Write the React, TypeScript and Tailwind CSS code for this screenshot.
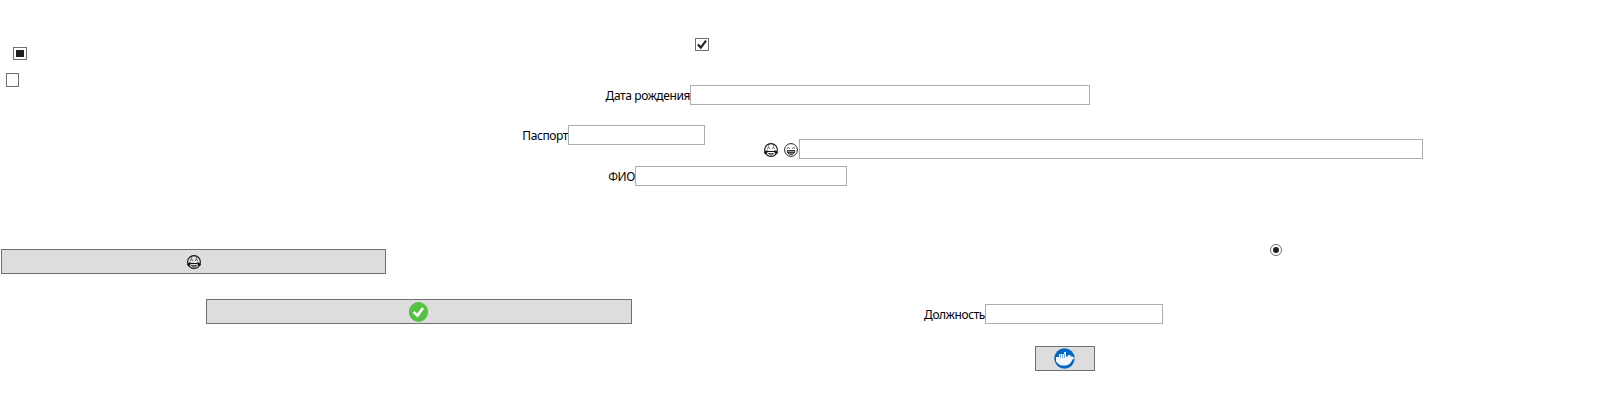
import type { ReactNode } from "react";

function Field({ label, className, labelClass = "tracking-[-0.4px]" }: { label: ReactNode; className: string; labelClass?: string }) {
  return (
    <label className="flex h-5 items-start justify-end">
      <span className={"flex h-5 items-center whitespace-nowrap pt-[2px] text-[12px] leading-4 " + labelClass}>{label}</span>
      <input type="text" className={"h-5 shrink-0 border border-[#abadb3] bg-white px-1 text-xs outline-none " + className} />
    </label>
  );
}

function PushButton({ children, className }: { children: ReactNode; className: string }) {
  return (
    <button className={"flex h-[25px] shrink-0 items-center justify-center border border-[#707070] bg-[#dddddd] " + className}>
      {children}
    </button>
  );
}

function Joy() {
  return (
    <svg className="h-[14px] w-[14px] shrink-0" viewBox="0 0 14 14" fill="none" stroke="#111">
      <circle cx="7" cy="7" r="6.4" strokeWidth="1.1" />
      <path d="M3.200 5.600 4.600 4.400l1.300 1.200M8.100 5.600l1.300-1.200 1.400 1.200M3.800 3.400l1.200-.8M9 2.600l1.200.8" strokeWidth=".8" />
      <path d="M3.400 8.500h7.200" strokeWidth="1" />
      <path d="M4.200 10.500c.6 1 1.700 1.400 2.800 1.400s2.200-.4 2.800-1.400z" strokeWidth=".7" />
      <path d="M3.900 7.200C1.800 7.300.2 8.300.2 9.400c0 1.300 1.400 1.700 2.400 1.100.8-.5 1.200-1.600 1.300-3.300zM10.100 7.200c2.100.1 3.700 1.100 3.700 2.200 0 1.300-1.400 1.700-2.400 1.100-.8-.5-1.200-1.600-1.300-3.300z" fill="#111" stroke="none" />
    </svg>
  );
}

function Grin() {
  return (
    <svg className="h-[14px] w-[14px] shrink-0" viewBox="0 0 14 14" fill="none" stroke="#222">
      <circle cx="7" cy="7" r="6.4" strokeWidth="1" />
      <path d="M3 5.500 4.400 4.500l1.400 1M8.200 5.500l1.400-1 1.400 1" strokeWidth=".8" />
      <path d="M3.200 7.500h7.600c-.1 2.700-1.500 4-3.800 4s-3.700-1.300-3.800-4z" fill="#999" strokeWidth=".9" />
      <path d="M3.500 9.500h7" stroke="#222" strokeWidth=".8" />
    </svg>
  );
}

function Done() {
  return (
    <svg className="mr-px h-5 w-[19px]" viewBox="0 0 19 20">
      <ellipse cx="9.500" cy="10" rx="9.600" ry="10" fill="#54c242" />
      <path d="M4.500 10 8.500 13.600 14 6" fill="none" stroke="#fff" strokeWidth="2.700" />
    </svg>
  );
}

function Whale() {
  return (
    <svg className="mr-px h-[21px] w-[21px]" viewBox="0 0 21 21">
      <circle cx="10.500" cy="10.500" r="10.200" fill="#0068c4" />
      <path d="M2 9H5V6h5V4h2v4.500h2V7H16.500v1.500H19v1h1.500V11H19l-1.500 2.500-2 2.500-3 1.500H7L4.500 16 2 13.500z" fill="#f3f5f7" />
      <path d="M6.500 6v4M8.500 6v4M10.500 6v4" stroke="#3c8bd0" strokeWidth=".7" />
    </svg>
  );
}

export default function App() {
  return (
    <main className="h-[406px] w-[1601px] overflow-hidden bg-white font-['Noto_Sans','Open_Sans',sans-serif] text-black">
      <section className="flex h-[85px] items-start pt-[38px]">
        <div className="flex w-[695px] shrink-0 flex-col pt-[9px]">
          <span role="checkbox" aria-checked="mixed" className="ml-[13px] flex h-[13px] w-[14px] items-center justify-center border border-[#707070]">
            <span className="h-[7px] w-2 bg-[#212121]" />
          </span>
          <span role="checkbox" aria-checked="false" className="ml-[6px] mt-[13px] h-[14px] w-[13px] shrink-0 border border-[#707070]" />
        </div>
        <span role="checkbox" aria-checked="true" className="h-[13px] w-[14px] border border-[#707070]">
          <svg className="h-[11px] w-3" viewBox="0 0 12 11">
            <path d="M1.900 5.500 4.800 8.600 10 1.700" fill="none" stroke="#212121" strokeWidth="2.200" />
          </svg>
        </span>
      </section>
      <section className="flex h-10 w-[1090px] justify-end">
        <Field label="Дата рождения" className="w-[400px]" />
      </section>
      <section className="flex h-[124px] items-start">
        <div className="flex w-[847px] shrink-0 flex-col gap-[21px]">
          <div className="w-[705px]">
            <Field label="Паспорт" className="w-[137px]" />
          </div>
          <Field label="ФИО" className="w-[212px]" />
        </div>
        <div className="-ml-[83px] mt-[14px] w-[659px] shrink-0">
          <Field label={<span className="mr-px flex gap-[6px] pb-px"><Joy /><Grin /></span>} className="w-[624px]" />
        </div>
      </section>
      <section className="flex h-[50px] items-start">
        <PushButton className="ml-px w-[385px]"><Joy /></PushButton>
        <span role="radio" aria-checked="true" className="-mt-[5px] ml-[884px] flex h-3 w-3 items-center justify-center rounded-full border border-[#707070]">
          <span className="h-[6px] w-[6px] rounded-full bg-[#212121]" />
        </span>
      </section>
      <section className="flex h-[47px] items-start">
        <PushButton className="ml-[206px] w-[426px]"><Done /></PushButton>
        <div className="mt-[5px] w-[531px] shrink-0">
          <Field label="Должность" className="w-[178px]" />
        </div>
      </section>
      <PushButton className="ml-[1035px] w-[60px]"><Whale /></PushButton>
    </main>
  );
}
